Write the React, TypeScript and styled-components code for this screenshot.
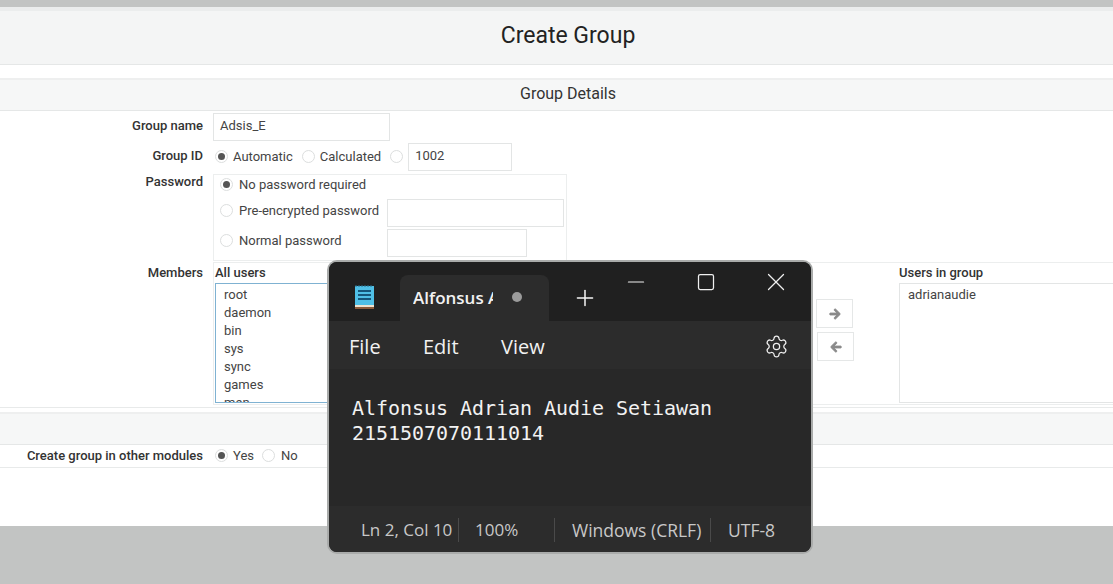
import { createGlobalStyle } from "styled-components";
import styled from "styled-components";
import { Settings, Plus, X, Minus, Square } from "lucide-react";
import { FaArrowLeft, FaArrowRight } from "react-icons/fa";

const GlobalStyle = createGlobalStyle`
  html, body { margin: 0; padding: 0; background: #c2c4c3; }
  * { box-sizing: border-box; }
`;

const Page = styled.div`
  position: relative;
  width: 1113px;
  height: 584px;
  overflow: hidden;
  padding-top: 7px;
  background: #c2c4c3;
  font-family: Roboto, "Liberation Sans", sans-serif;
  color: #333;
`;

const Panel = styled.div`
  width: 1136px;
  height: 519px;
  background: #fff;
  border-top: 4px solid #ebeded;
`;

const Header = styled.h1`
  margin: 0;
  height: 54px;
  background: #f4f5f5;
  border-bottom: 1px solid #e5e7e7;
  font-size: 23px;
  font-weight: 400;
  line-height: 50px;
  text-align: center;
  color: #222;
`;

const SectionHead = styled.div<{ $top: number }>`
  margin-top: ${(p) => p.$top}px;
  height: 33px;
  background: #f6f7f7;
  border-top: 2px solid #eeefef;
  border-bottom: 1px solid #e5e7e7;
  font-size: 16px;
  line-height: 27px;
  text-align: center;
  color: #333;
`;

const FormRow = styled.div<{ $top: number }>`
  display: grid;
  grid-template-columns: 203px 1fr;
  column-gap: 10px;
  margin-top: ${(p) => p.$top}px;
`;

const Label = styled.label<{ $pt: number }>`
  padding-top: ${(p) => p.$pt}px;
  font-size: 13px;
  font-weight: 500;
  line-height: 16px;
  text-align: right;
  color: #333;
`;

const InlineGroup = styled.div<{ $pb?: number }>`
  display: flex;
  align-items: center;
  padding-bottom: ${(p) => p.$pb ?? 0}px;
`;

const TextInput = styled.div<{ $w: number; $ml?: number }>`
  width: ${(p) => p.$w}px;
  height: 28px;
  margin-left: ${(p) => p.$ml ?? 0}px;
  padding-left: 6px;
  border: 1px solid #e3e5e5;
  font-size: 13px;
  line-height: 24px;
  color: #444;
`;

const GroupIdLine = styled(InlineGroup)`
  height: 26px;
  & > ${TextInput} {
    align-self: flex-start;
  }
`;

const RadioMark = styled.span<{ $checked?: boolean; $ml?: number; $mr?: number }>`
  display: inline-block;
  flex: none;
  position: relative;
  width: 13px;
  height: 13px;
  margin-left: ${(p) => p.$ml ?? 0}px;
  margin-right: ${(p) => p.$mr ?? 5}px;
  border-radius: 50%;
  border: 1px solid #dcdede;
  background: #fff;
  &::after {
    content: "";
    display: ${(p) => (p.$checked ? "block" : "none")};
    position: absolute;
    left: 2px;
    top: 2px;
    width: 7px;
    height: 7px;
    border-radius: 50%;
    background: #555;
  }
`;

const RadioText = styled.span`
  font-size: 13px;
  color: #444;
`;

const PasswordBox = styled.div`
  width: 354px;
  height: 87px;
  padding: 2px 2px 0 6px;
  border: 1px solid #eceeee;
`;

const PasswordLine = styled.div<{ $h: number }>`
  display: grid;
  grid-template-columns: 167px auto;
  align-items: center;
  height: ${(p) => p.$h}px;
`;

const Members = styled.div`
  display: grid;
  grid-template-columns: 596px 88px 1fr;
  height: 143px;
  padding-left: 1px;
  border-top: 1px solid #eceeee;
  border-bottom: 1px solid #eceeee;
  border-left: 1px solid #eceeee;
`;

const Divider = styled.div`
  height: 1px;
  margin-top: 2px;
  background: #e8eaea;
`;

const ListHeading = styled.div`
  height: 20px;
  font-size: 13px;
  font-weight: 500;
  line-height: 19px;
  color: #333;
`;

const ListBox = styled.div<{ $focus?: boolean }>`
  height: 120px;
  padding: 2px 0 0 8px;
  overflow: hidden;
  border: 1px solid ${(p) => (p.$focus ? "#7fb2d2" : "#e3e5e5")};
  font-size: 13px;
  line-height: 18px;
  color: #444;
`;

const ArrowColumn = styled.div`
  display: flex;
  flex-direction: column;
  gap: 4px;
  padding: 36px 0 0 5px;
`;

const ArrowButton = styled.div<{ $shift?: number }>`
  display: flex;
  align-items: center;
  justify-content: center;
  width: 37px;
  height: 29px;
  margin-left: ${(p) => p.$shift ?? 0}px;
  border: 1px solid #e5e7e7;
  color: #8a8a8a;
  font-size: 12px;
  & svg {
    stroke: currentColor;
    stroke-width: 40;
  }
`;

const OptionRow = styled.div`
  display: grid;
  grid-template-columns: 203px 1fr;
  column-gap: 12px;
  align-items: center;
  height: 23px;
  padding-bottom: 2px;
  border-bottom: 1px solid #e8eaea;
`;

const OptionLabel = styled.span`
  font-size: 13px;
  font-weight: 500;
  text-align: right;
  color: #333;
`;

/* notepad window floats over the form */
const NotepadWindow = styled.div`
  position: absolute;
  left: 327px;
  top: 260px;
  width: 486px;
  height: 294px;
  display: flex;
  flex-direction: column;
  overflow: hidden;
  border: 2px solid #a9abaa;
  border-radius: 10px;
  background: #282828;
  font-family: "Open Sans", "Noto Sans", sans-serif;
  color: #f2f2f2;
`;

const TitleBar = styled.div`
  display: flex;
  flex: none;
  height: 59px;
  background: #202020;
`;

const AppIcon = styled.svg`
  flex: none;
  margin: 23px 0 0 26px;
`;

const Tab = styled.div`
  display: flex;
  flex: none;
  align-items: center;
  width: 149px;
  height: 46px;
  margin: 13px 0 0 26px;
  padding: 0 0 2px 13px;
  border-radius: 8px 8px 0 0;
  background: #2c2c2c;
`;

const TabTitle = styled.span`
  width: 80px;
  overflow: hidden;
  white-space: nowrap;
  font-size: 17px;
  font-weight: 600;
`;

const UnsavedDot = styled.span`
  flex: none;
  width: 10px;
  height: 10px;
  margin-left: 19px;
  border-radius: 50%;
  background: #9b9b9b;
`;

const NewTab = styled.div`
  flex: none;
  width: 26px;
  height: 26px;
  margin: 23px 0 0 23px;
  color: #f4f4f4;
`;

const Caption = styled.div`
  display: flex;
  margin-left: auto;
`;

const CaptionButton = styled.div`
  display: flex;
  align-items: center;
  justify-content: center;
  width: 70px;
  height: 39px;
  color: #f0f0f0;
`;

const MenuBar = styled.div`
  display: flex;
  flex: none;
  align-items: center;
  height: 48px;
  padding: 2px 22px 0 20px;
  background: #2c2c2c;
  font-size: 20px;
`;

const MenuItem = styled.span<{ $w: number }>`
  width: ${(p) => p.$w}px;
`;

const GearSlot = styled.span`
  display: flex;
  margin-left: auto;
  color: #eee;
`;

const Editor = styled.pre`
  flex: 1;
  margin: 0;
  padding: 27px 0 0 23px;
  font-family: "DejaVu Sans Mono", "Liberation Mono", monospace;
  font-size: 20px;
  letter-spacing: -0.04px;
  line-height: 25px;
  color: #f2f2f2;
`;

const StatusBar = styled.div`
  display: flex;
  flex: none;
  align-items: center;
  height: 46px;
  padding: 2px 0 0 32px;
  background: #2c2c2c;
  color: #c8c8c8;
`;

const StatusCell = styled.span<{ $w: number; $sep?: boolean; $pl?: number; $fs?: number }>`
  width: ${(p) => p.$w}px;
  height: 24px;
  padding-left: ${(p) => p.$pl ?? 0}px;
  font-size: ${(p) => p.$fs ?? 17.5}px;
  line-height: 24px;
  white-space: nowrap;
  border-right: ${(p) => (p.$sep ? "1px solid #4a4a4a" : "none")};
`;

const users = ["root", "daemon", "bin", "sys", "sync", "games", "man"];

export default function App() {
  return (
    <Page>
      <GlobalStyle />
      <Panel>
        <Header>Create Group</Header>
        <SectionHead $top={13}>Group Details</SectionHead>

        <FormRow $top={2}>
          <Label $pt={5}>Group name</Label>
          <TextInput $w={177}>Adsis_E</TextInput>
        </FormRow>

        <FormRow $top={2}>
          <Label $pt={5}>Group ID</Label>
          <GroupIdLine>
            <RadioMark $checked $ml={2} />
            <RadioText>Automatic</RadioText>
            <RadioMark $ml={9} />
            <RadioText>Calculated</RadioText>
            <RadioMark $ml={9} />
            <TextInput $w={104}>1002</TextInput>
          </GroupIdLine>
        </FormRow>

        <FormRow $top={5}>
          <Label $pt={0}>Password</Label>
          <PasswordBox>
            <PasswordLine $h={20}>
              <InlineGroup $pb={6}>
                <RadioMark $checked $mr={6} />
                <RadioText>No password required</RadioText>
              </InlineGroup>
            </PasswordLine>
            <PasswordLine $h={32}>
              <InlineGroup $pb={6}>
                <RadioMark $mr={6} />
                <RadioText>Pre-encrypted password</RadioText>
              </InlineGroup>
              <TextInput $w={177} />
            </PasswordLine>
            <PasswordLine $h={28}>
              <InlineGroup $pb={6}>
                <RadioMark $mr={6} />
                <RadioText>Normal password</RadioText>
              </InlineGroup>
              <TextInput $w={140} />
            </PasswordLine>
          </PasswordBox>
        </FormRow>

        <FormRow $top={1}>
          <Label $pt={3}>Members</Label>
          <Members>
            <div>
              <ListHeading>All users</ListHeading>
              <ListBox $focus>
                {users.map((u) => (
                  <div key={u}>{u}</div>
                ))}
              </ListBox>
            </div>
            <ArrowColumn>
              <ArrowButton>
                <FaArrowRight />
              </ArrowButton>
              <ArrowButton $shift={1}>
                <FaArrowLeft />
              </ArrowButton>
            </ArrowColumn>
            <div>
              <ListHeading>Users in group</ListHeading>
              <ListBox>adrianaudie</ListBox>
            </div>
          </Members>
        </FormRow>
        <Divider />

        <SectionHead $top={4} />
        <OptionRow>
          <OptionLabel>Create group in other modules</OptionLabel>
          <InlineGroup>
            <RadioMark $checked />
            <RadioText>Yes</RadioText>
            <RadioMark $ml={8} $mr={6} />
            <RadioText>No</RadioText>
          </InlineGroup>
        </OptionRow>
      </Panel>

      <NotepadWindow>
        <TitleBar>
          <AppIcon width="19" height="24" viewBox="0 0 19 24">
            <rect x="0" y="1" width="19" height="19" fill="#4fbfe6" />
            <path d="M1 2V0M4 2V0M7 2V0M10 2V0M13 2V0M16 2V0" stroke="#2a6f8c" strokeWidth="1" />
            <rect x="0" y="20" width="19" height="2" fill="#efe3cf" />
            <rect x="0" y="22" width="19" height="2" fill="#8a5a3a" />
            <path d="M3 6h13M3 10h13M3 14h13" stroke="#15567a" strokeWidth="2" />
          </AppIcon>
          <Tab>
            <TabTitle>Alfonsus Adrian</TabTitle>
            <UnsavedDot />
          </Tab>
          <NewTab>
            <Plus size={26} strokeWidth={1.4} />
          </NewTab>
          <Caption>
            <CaptionButton>
              <Minus size={26} strokeWidth={1.1} />
            </CaptionButton>
            <CaptionButton>
              <Square size={20} strokeWidth={1.5} />
            </CaptionButton>
            <CaptionButton>
              <X size={30} strokeWidth={1} />
            </CaptionButton>
          </Caption>
        </TitleBar>
        <MenuBar>
          <MenuItem $w={74}>File</MenuItem>
          <MenuItem $w={78}>Edit</MenuItem>
          <MenuItem $w={60}>View</MenuItem>
          <GearSlot>
            <Settings size={25} strokeWidth={1.2} />
          </GearSlot>
        </MenuBar>
        <Editor>
          {"Alfonsus Adrian Audie Setiawan\n2151507070111014"}
        </Editor>
        <StatusBar>
          <StatusCell $w={98} $sep $fs={17}>Ln 2, Col 10</StatusCell>
          <StatusCell $w={96} $sep $pl={16} $fs={17}>100%</StatusCell>
          <StatusCell $w={156} $sep $pl={17}>Windows (CRLF)</StatusCell>
          <StatusCell $w={90} $pl={17}>UTF-8</StatusCell>
        </StatusBar>
      </NotepadWindow>
    </Page>
  );
}
